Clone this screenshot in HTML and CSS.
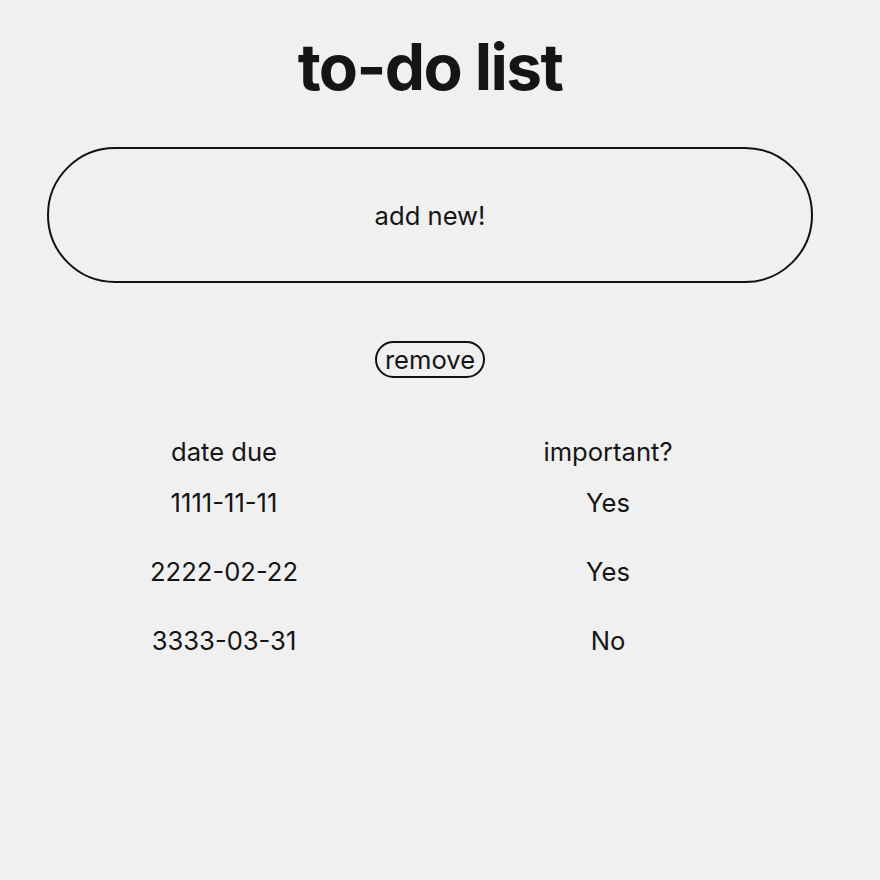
FILE: index.html
```html
<!DOCTYPE html>
<html>
<head>
<meta charset="utf-8">
<link rel="stylesheet" href="styles.css">
</head>
<body>
<div class="page">
  <h1 class="title">to-do list</h1>
  <button class="add">add new!</button>
  <div class="remove-row"><button class="remove">remove</button></div>
  <div class="table">
    <div class="cell head">date due</div>
    <div class="cell head">important?</div>
    <div class="cell">1111-11-11</div>
    <div class="cell">Yes</div>
    <div class="cell">2222-02-22</div>
    <div class="cell">Yes</div>
    <div class="cell">3333-03-31</div>
    <div class="cell">No</div>
  </div>
</div>
</body>
</html>
```

FILE: styles.css
```css
html, body {
  margin: 0;
  padding: 0;
  background: #f0f0f0;
}
body {
  font-family: Inter, "Noto Sans", sans-serif;
  color: #151515;
}
.page {
  width: 860px;
  display: flex;
  flex-direction: column;
  align-items: center;
}
.title {
  margin: 26px 0 0;
  font-size: 64px;
  font-weight: 700;
  line-height: 82px;
  letter-spacing: -1.6px;
}
.add {
  margin-top: 39px;
  width: 766px;
  height: 136px;
  border: 2px solid #111;
  border-radius: 68px;
  background: transparent;
  font-family: inherit;
  font-size: 25.6px;
  color: #151515;
}
.remove-row {
  margin-top: 58px;
}
.remove {
  height: 37px;
  width: 110px;
  border: 2px solid #111;
  border-radius: 19px;
  background: transparent;
  font-family: inherit;
  font-size: 25.6px;
  color: #151515;
  padding: 0;
}
.table {
  margin-top: 52px;
  display: grid;
  grid-template-columns: 356px 412px;
  grid-auto-rows: 69px;
  grid-template-rows: 51px;
}
.cell {
  text-align: center;
  font-size: 25.6px;
  line-height: 44px;
}
```
